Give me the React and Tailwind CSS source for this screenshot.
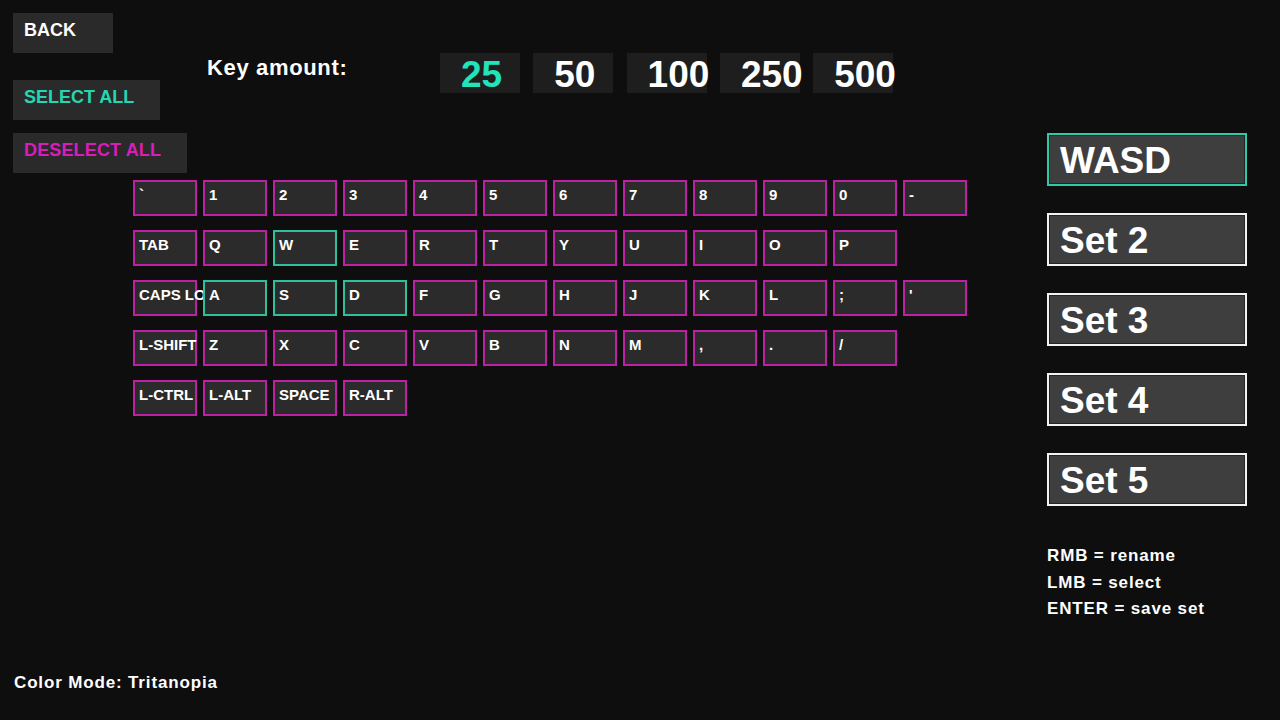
import React from 'react';

const rows = [
  ['`', '1', '2', '3', '4', '5', '6', '7', '8', '9', '0', '-'],
  ['TAB', 'Q', 'W', 'E', 'R', 'T', 'Y', 'U', 'I', 'O', 'P'],
  ['CAPS LOCK', 'A', 'S', 'D', 'F', 'G', 'H', 'J', 'K', 'L', ';', "'"],
  ['L-SHIFT', 'Z', 'X', 'C', 'V', 'B', 'N', 'M', ',', '.', '/'],
  ['L-CTRL', 'L-ALT', 'SPACE', 'R-ALT'],
];

const selected = ['W', 'A', 'S', 'D'];
const amounts = ['25', '50', '100', '250', '500'];
const sets = ['WASD', 'Set 2', 'Set 3', 'Set 4', 'Set 5'];

const Key = ({ label }) => {
  const on = selected.includes(label);
  return (
    <div
      className={
        on
          ? 'relative h-[36px] w-[64px] border-2 border-[#2fbf9c] bg-[#2b2b2b] pl-[4px] pt-[5px]'
          : 'relative h-[36px] w-[64px] border-2 border-[#bd21a3] bg-[#2b2b2b] pl-[4px] pt-[5px]'
      }
    >
      <span className="block whitespace-nowrap text-[15px] font-bold leading-[15px]">{label}</span>
    </div>
  );
};

const App = () => {
  return (
    <div className="flex h-[720px] w-[1280px] overflow-hidden bg-[#0e0e0e] font-['Liberation_Sans',Arial,sans-serif] text-white">
      <div className="flex w-[1047px] flex-col pl-[13px] pt-[13px]">
        <div className="flex">
          <div className="flex w-[194px] flex-col">
            <div className="h-[40px] w-[100px] bg-[#2a2a2a] px-[11px] pt-[8px] text-[18px] font-bold leading-[18px]">
              BACK
            </div>
            <div className="mt-[27px] h-[40px] w-[147px] bg-[#2a2a2a] px-[11px] pt-[8px] text-[18px] font-bold leading-[18px] text-[#25d6b2]">
              SELECT ALL
            </div>
            <div className="mt-[13px] h-[40px] w-[174px] bg-[#2a2a2a] px-[11px] pt-[8px] text-[18px] font-bold leading-[18px] tracking-[0.15px] text-[#d91db9]">
              DESELECT ALL
            </div>
          </div>
          <div className="mt-[40px] flex items-start">
            <div className="mt-[4px] w-[233px] text-[22px] font-bold leading-[22px] tracking-[0.65px]">Key amount:</div>
            <div className="flex gap-[13.3px]">
              {amounts.map((a, i) => (
                <div
                  key={a}
                  className={
                    i === 0
                      ? 'flex h-[40px] w-[80px] items-center whitespace-nowrap bg-[#1e1e1e] pl-[21px] pt-[2px] text-[37px] font-bold leading-none text-[#22e3bb]'
                      : 'flex h-[40px] w-[80px] items-center whitespace-nowrap bg-[#1e1e1e] pl-[21px] pt-[2px] text-[37px] font-bold leading-none'
                  }
                >
                  {a}
                </div>
              ))}
            </div>
          </div>
        </div>

        <div className="ml-[120px] mt-[7px] flex flex-col gap-[14px]">
          {rows.map((row, r) => (
            <div key={r} className="flex gap-[6px]">
              {row.map((k) => (
                <Key key={k} label={k} />
              ))}
            </div>
          ))}
        </div>

        <div className="mb-[29px] ml-[1px] mt-auto text-[17px] font-bold leading-[17px] tracking-[0.85px]">
          Color Mode: Tritanopia
        </div>
      </div>

      <div className="flex w-[200px] flex-col pt-[133px]">
        <div className="flex flex-col gap-[27px]">
          {sets.map((s, i) => (
            <div
              key={s}
              className={
                i === 0
                  ? 'flex h-[53px] w-[200px] items-center border-2 border-[#2ec9a6] bg-[#3e3e3e] pl-[11px] pt-[2px] text-[37px] font-bold leading-none ring-1 ring-inset ring-[#242424]'
                  : 'flex h-[53px] w-[200px] items-center border-2 border-[#f2f2f2] bg-[#3e3e3e] pl-[11px] pt-[2px] text-[37px] font-bold leading-none ring-1 ring-inset ring-[#242424]'
              }
            >
              {s}
            </div>
          ))}
        </div>
        <div className="mt-[37px] text-[17px] font-bold leading-[26.5px] tracking-[0.85px]">
          <div>RMB = rename</div>
          <div>LMB = select</div>
          <div>ENTER = save set</div>
        </div>
      </div>
    </div>
  );
};

export default App;
